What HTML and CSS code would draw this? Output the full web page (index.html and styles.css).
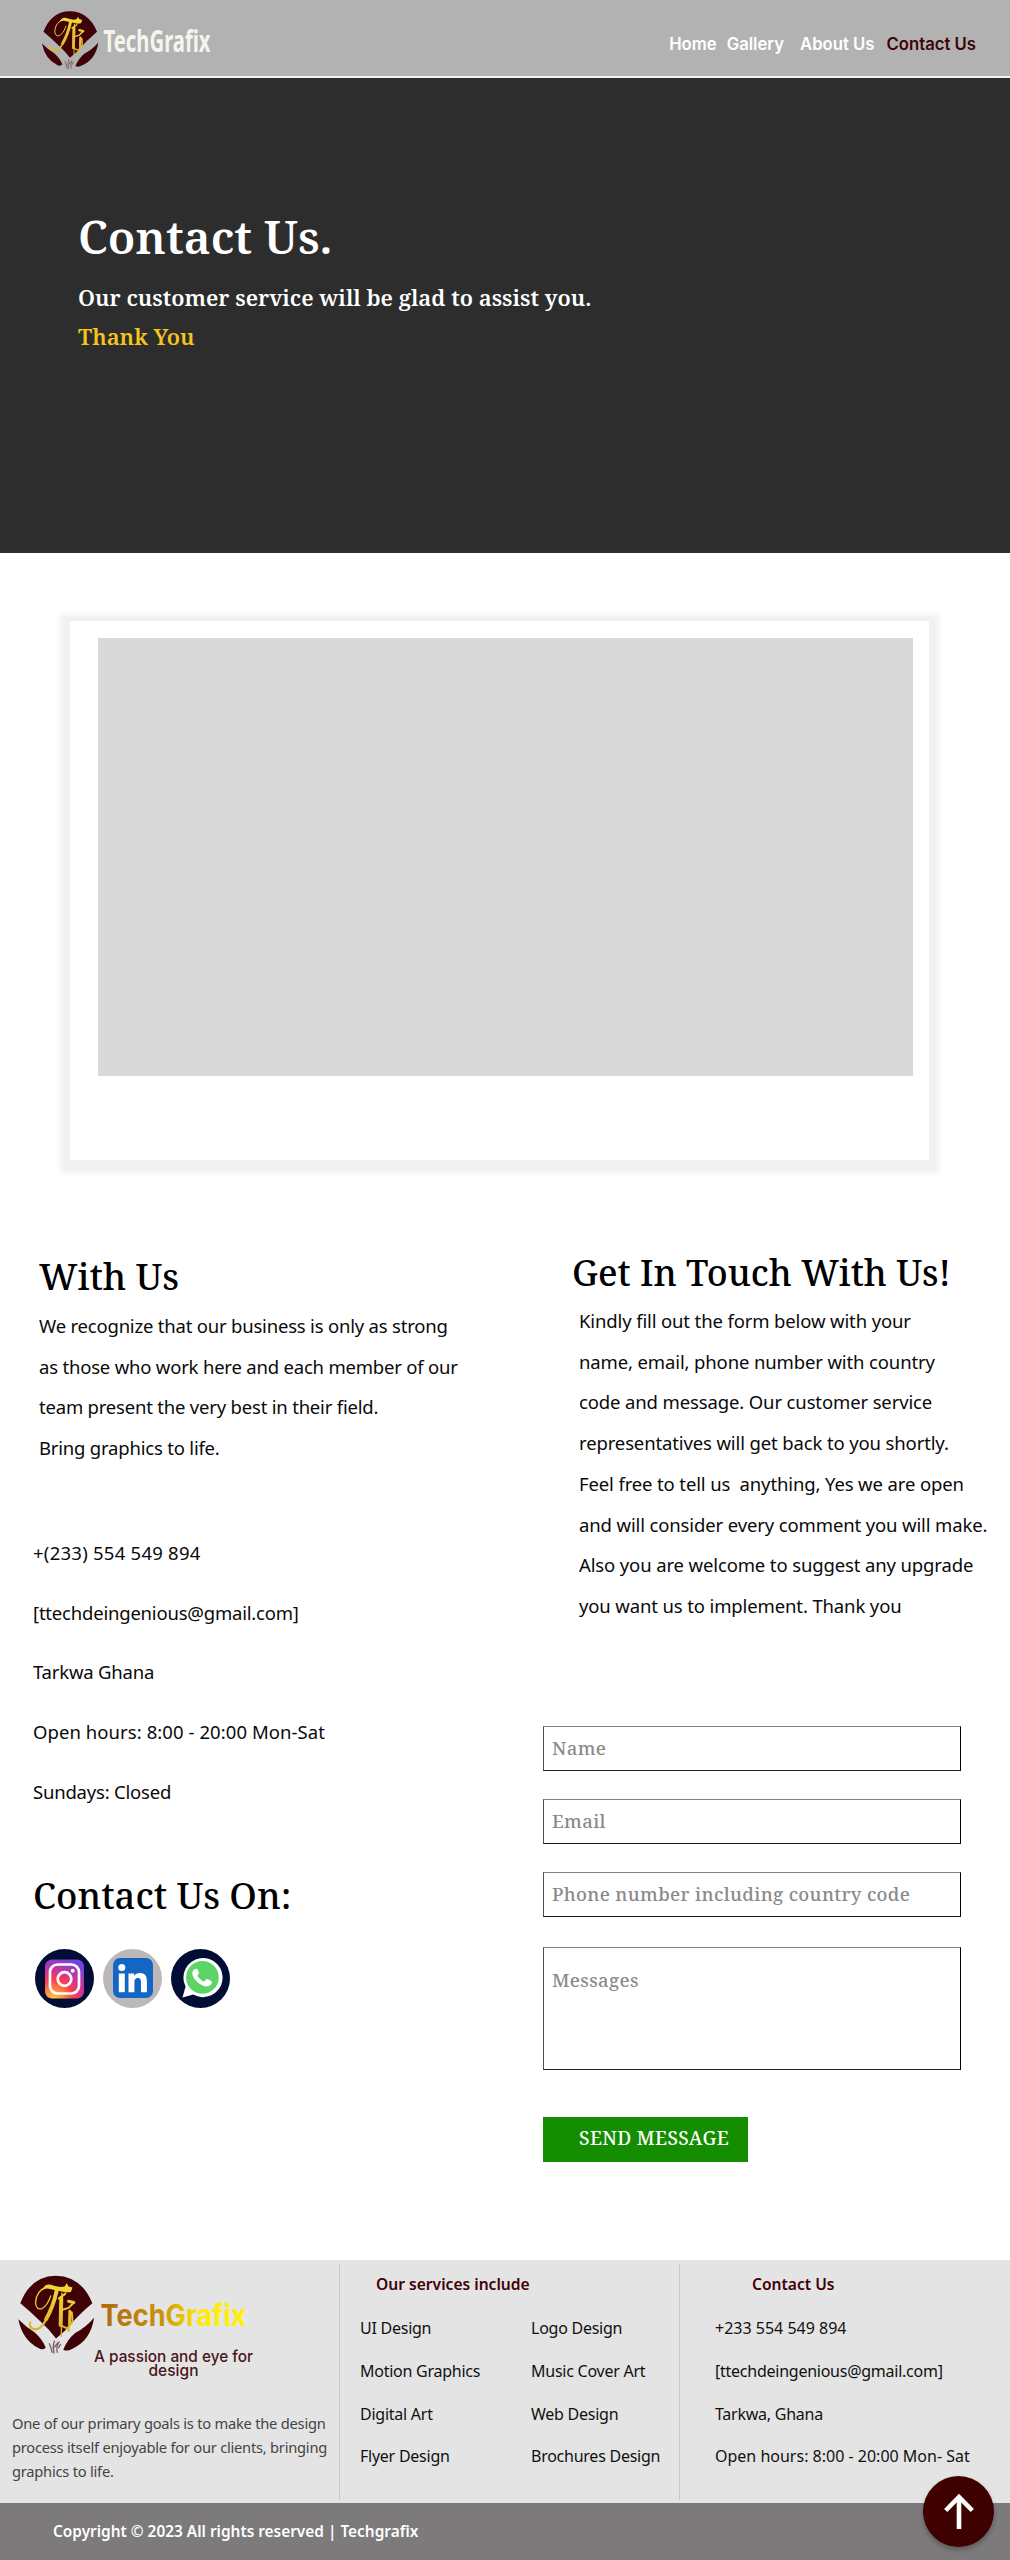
FILE: index.html
```
<!DOCTYPE html>
<html lang="en">
<head>
<meta charset="utf-8">
<title>TechGrafix – Contact Us</title>
<link rel="stylesheet" href="styles.css">
</head>
<body>
<svg class="defs" width="0" height="0" aria-hidden="true">
  <defs>
    <linearGradient id="wordmark" x1="0" x2="1" y1="0" y2="0">
      <stop offset="0" stop-color="#b0680f"/><stop offset=".42" stop-color="#c9920c"/><stop offset=".68" stop-color="#ffec00"/><stop offset="1" stop-color="#fff200"/>
    </linearGradient>
    <linearGradient id="gold" gradientUnits="userSpaceOnUse" x1="0" x2="0" y1="130" y2="290">
      <stop offset="0" stop-color="#f3d838"/><stop offset="1" stop-color="#d9b02a"/>
    </linearGradient>
    <radialGradient id="insta" cx=".22" cy="1.05" r="1.15">
      <stop offset="0" stop-color="#ffd35c"/><stop offset=".2" stop-color="#ff9a3c"/><stop offset=".45" stop-color="#fb3f4e"/><stop offset=".7" stop-color="#c434a0"/><stop offset="1" stop-color="#6a45e0"/>
    </radialGradient>
    <symbol id="emblem" viewBox="50 102 236 244" preserveAspectRatio="none">
      <g fill="#3f0206">
        <path d="M60 190Q92 108 167 107Q244 108 278 190Q232 228 196 272L168 296Q150 272 122 246Q92 216 60 190Z"/>
        <path d="M54 238Q78 262 104 278Q128 300 137 324Q128 332 116 326Q66 300 54 238Z"/>
        <path d="M283 234Q274 302 216 328Q202 336 190 330Q202 300 226 280Q260 262 283 234Z"/>
      </g>
      <path fill="none" stroke="#7c5f6c" stroke-width="4" stroke-linecap="round" d="M148 312Q154 324 156 338M163 304Q157 322 162 340M164 322Q172 310 176 308Q168 324 172 338M182 314L176 324"/>
      <g fill="none" stroke="url(#gold)" stroke-linecap="round" stroke-linejoin="round">
        <path stroke-width="4" d="M142 140Q108 152 106 188Q108 212 126 206Q142 198 152 168M186 160L184 290"/>
        <path stroke-width="12" d="M170 152Q160 200 138 238"/>
        <path stroke-width="7" d="M143 228Q122 278 96 266Q86 260 90 248"/>
        <path stroke-width="12" d="M184 174L182 256"/>
        <path stroke-width="9" d="M210 214L209 252M206 184L222 188"/>
        <path stroke-width="6" d="M176 176L196 162M180 212L206 204L220 190M180 256L202 266L218 246L216 218M208 256L206 274"/>
      </g>
      <path fill="url(#gold)" d="M126 152Q132 132 150 134Q176 144 194 140L201 129L205 139L218 143L213 156L198 158Q164 150 142 146Q132 146 126 152Z"/>
    </symbol>
  </defs>
</svg>

<header class="site-header">
  <svg class="brand" width="180" height="66" viewBox="36 6 180 66" role="img" aria-label="TechGrafix">
    <use href="#emblem" x="41" y="10" width="58" height="60"/>
    <text class="brand-name" x="103.500" y="52" textLength="107" lengthAdjust="spacingAndGlyphs">TechGrafix</text>
  </svg>
  <nav class="nav">
    <a href="#">Home</a><a href="#">Gallery</a><a href="#">About Us</a><a class="active" href="#">Contact Us</a>
  </nav>
</header>

<section class="hero">
  <h1>Contact Us.</h1>
  <p>Our customer service will be glad to assist you.</p>
  <p class="thanks">Thank You</p>
</section>

<main>
  <div class="map-card"><div class="map"></div></div>

  <div class="columns">
    <section class="about">
      <h2>With Us</h2>
      <p class="copy">We recognize that our business is only as strong<br>as those who work here and each member of our<br>team present the very best in their field.<br>Bring graphics to life.</p>
      <ul class="details">
        <li class="phone">+(233) 554 549 894</li>
        <li>[ttechdeingenious@gmail.com]</li>
        <li>Tarkwa Ghana</li>
        <li class="hours">Open hours: 8:00 - 20:00 Mon-Sat</li>
        <li>Sundays: Closed</li>
      </ul>
      <h2 class="social-title">Contact Us On:</h2>
      <div class="social">
        <svg viewBox="0 0 59 59" role="img" aria-label="Instagram">
          <circle cx="29.500" cy="29.500" r="29.500" fill="#020d36"/>
          <rect x="10" y="10.500" width="39" height="39" rx="7" fill="url(#insta)"/>
          <g fill="none" stroke="#fff" stroke-width="2.700"><rect x="15" y="15.500" width="29" height="29" rx="7.500"/><circle cx="29.500" cy="30" r="6.800"/></g>
          <circle cx="37.700" cy="21.700" r="2" fill="#fff"/>
        </svg>
        <svg viewBox="0 0 59 59" role="img" aria-label="LinkedIn">
          <circle cx="29.500" cy="29.500" r="29.500" fill="#bdb8b8"/>
          <rect x="10" y="9" width="40" height="40" rx="7" fill="#1466c5"/>
          <g fill="#fff"><circle cx="18.800" cy="18.500" r="3.500"/><rect x="15.800" y="24.500" width="6" height="18.700"/><path d="M25.500 24.500h5.600v2.600c1-1.800 3-3.100 5.900-3.100 5.800 0 6.900 3.800 6.900 8.800v10.400H38v-9.300c0-2.200 0-5-3.100-5s-3.500 2.400-3.500 4.900v9.400h-5.900z"/></g>
        </svg>
        <svg viewBox="0 0 59 59" role="img" aria-label="WhatsApp">
          <circle cx="29.500" cy="29.500" r="29.500" fill="#020d36"/>
          <path d="M11.500 48.500L14.600 37.600A19.600 19.600 0 1 1 22.300 45.600Z" fill="#fff"/>
          <circle cx="31.400" cy="28.400" r="16.300" fill="#5dd466"/>
          <path d="M25.800 19.800c-1.400-.6-3.400.6-4.200 2.700-1 3 1 7 4.700 10.400 3.600 3.300 8.100 5.200 11.300 4.200 2.400-.8 3.700-2.800 3.200-4.300-.3-.8-4.200-2.800-5-2.700-.9.100-1.900 2.300-2.700 2.400-1.600.1-6.300-4-6.600-5.700-.1-.9 1.500-1.900 1.500-2.800 0-.7-1.400-3.900-2.200-4.200z" fill="#fff"/>
        </svg>
      </div>
    </section>

    <section class="touch">
      <h2>Get In Touch With Us!</h2>
      <p class="copy">Kindly fill out the form below with your<br>name, email, phone number with country<br>code and message. Our customer service<br>representatives will get back to you shortly.<br>Feel free to tell us&nbsp; anything, Yes we are open<br>and will consider every comment you will make.<br>Also you are welcome to suggest any upgrade<br>you want us to implement. Thank you</p>
      <form class="form">
        <input type="text" placeholder="Name">
        <input type="text" placeholder="Email">
        <input type="text" placeholder="Phone number including country code">
        <textarea placeholder="Messages"></textarea>
        <button type="button">SEND MESSAGE</button>
      </form>
    </section>
  </div>
</main>

<footer class="footer">
  <div class="footer-grid">
    <section class="footer-brand">
      <svg width="256" height="119" viewBox="10 2266 256 119" role="img" aria-label="TechGrafix">
        <use href="#emblem" x="17" y="2274" width="78" height="81"/>
        <text class="wordmark" x="100.500" y="2326" textLength="146" lengthAdjust="spacingAndGlyphs">TechGrafix</text>
        <text class="tagline" x="94" y="2361.500" textLength="159" lengthAdjust="spacingAndGlyphs">A passion and eye for</text>
        <text class="tagline" x="148.500" y="2376" textLength="50" lengthAdjust="spacingAndGlyphs">design</text>
      </svg>
      <p>One of our primary goals is to make the design<br>process itself enjoyable for our clients, bringing<br>graphics to life.</p>
    </section>
    <section class="footer-services">
      <h3>Our services include</h3>
      <div class="service-lists">
        <ul><li>UI Design</li><li>Motion Graphics</li><li>Digital Art</li><li>Flyer Design</li></ul>
        <ul><li>Logo Design</li><li>Music Cover Art</li><li>Web Design</li><li>Brochures Design</li></ul>
      </div>
    </section>
    <section class="footer-contact">
      <h3>Contact Us</h3>
      <ul><li class="num">+233 554 549 894</li><li>[ttechdeingenious@gmail.com]</li><li>Tarkwa, Ghana</li><li class="num">Open hours: 8:00 - 20:00 Mon- Sat</li></ul>
    </section>
  </div>
  <div class="copyright">Copyright © 2023 All rights reserved | Techgrafix</div>
  <a class="to-top" href="#" aria-label="Back to top">
    <svg width="30" height="37" viewBox="0 0 30 37" fill="none" stroke="#fff"><path stroke-width="4.600" d="M15 36V4"/><path stroke-width="4.600" d="M1.700 17.500L15 4L28.300 17.500"/></svg>
  </a>
</footer>
</body>
</html>
```
FILE: styles.css
```
* { box-sizing: border-box; }
body { margin: 0; width: 1010px; background: #fff; color: #0a0a0a; font-family: "Noto Sans", sans-serif; white-space: nowrap; }
h1, h2, h3, p, ul { margin: 0; padding: 0; }
ul { list-style: none; }
a { text-decoration: none; }
svg { display: block; overflow: visible; }
.defs { position: absolute; }

.site-header { height: 78px; background: #b2b2b2; border-bottom: 2px solid #f4f4f4; display: flex; justify-content: space-between; align-items: flex-start; padding: 6px 34px 0 36px; }
.brand-name { font: 700 31px "Noto Sans", sans-serif; fill: #f5f5ee; }
.nav { display: flex; margin-top: 27px; font: 600 16.700px/22px Inter, sans-serif; }
.nav a { color: #fff; }
.nav a:nth-child(2) { margin-left: 10px; }
.nav a:nth-child(3) { margin-left: 16px; }
.nav a:nth-child(4) { margin-left: 12px; }
.nav .active { color: #3f0206; }

.hero { height: 475px; background: #2d2d2d; color: #fff; padding: 129px 0 0 78px; font-family: "Noto Serif", serif; }
.hero h1 { font-size: 46.100px; line-height: 60px; font-weight: 600; }
.hero p { font-size: 22.150px; line-height: 39px; font-weight: 600; margin-top: 11px; }
.hero .thanks { color: #f5c51b; margin-top: 0; }

.map-card { width: 859px; height: 539px; margin: 68px 0 0 70px; padding: 17px 16px 0 28px; box-shadow: 0 3px 6px 10px #f1f1f1; }
.map { height: 438px; background: #d9d9d9; }

.columns { display: grid; grid-template-columns: 510px 500px; height: 1100px; }
h2 { font: 500 36.500px/50px "Noto Serif", serif; color: #000; }
.copy { font-size: 18.500px; line-height: 40.700px; letter-spacing: -.2px; }
.about { padding: 91px 0 0 33px; }
.about > h2:first-child, .about .copy { margin-left: 6px; }
.about .copy { margin-top: 5px; }
.details { margin-top: 54px; font-size: 18.500px; line-height: 59.700px; letter-spacing: -.2px; }
.details .hours { letter-spacing: .070px; }
.details .phone { letter-spacing: .250px; }
.social-title { margin-top: 49px; }
.social { display: flex; gap: 9px; margin: 29px 0 0 2px; }
.social svg { width: 59px; height: 59px; }

.touch { padding: 87px 0 0 33px; }
.touch h2 { margin-left: 29px; font-size: 35.800px; }
.touch .copy { margin: 4px 0 0 36px; letter-spacing: -.130px; }
.form { display: flex; flex-direction: column; margin-top: 99px; }
.form input, .form textarea { width: 418px; height: 45px; border: 1px solid; border-color: #828282 #000 #1c1c20 #505055; border-radius: 0; background: #fff; padding: 0 8px 1px; font: 500 18.600px/28px "Noto Serif", serif; letter-spacing: .33px; margin: 0 0 28px; outline: 0; }
.form ::placeholder { color: #8a8a8a; opacity: 1; }
.form textarea { height: 123px; padding-top: 18px; margin: 2px 0 47px; resize: none; display: block; }
.form button { width: 205px; height: 45px; border: 0; background: #148d00; color: #fff; padding: 0 0 2px 36px; text-align: left; font: 500 19px/28px "Noto Serif", serif; letter-spacing: .350px; }

.footer { position: relative; height: 300px; }
.footer-grid { height: 243px; background: #e4e4e4; display: grid; grid-template-columns: 339px 340px 331px; padding: 4px 0 3px; font-size: 16px; line-height: 42.800px; letter-spacing: -.25px; color: #111; }
.footer-services, .footer-contact { border-left: 1px solid #c9c9c9; }
h3 { font-size: 15.600px; line-height: 30px; font-weight: 600; letter-spacing: 0; color: #3f0206; }
.footer-brand svg { margin: 2px 0 0 10px; }
.footer-brand p { margin: 27px 0 0 12px; font-size: 14.700px; line-height: 23.800px; letter-spacing: -.240px; color: #444; }
.footer-services { padding: 5px 0 0 20px; }
.footer-services h3 { margin-left: 16px; }
.service-lists { display: grid; grid-template-columns: 171px 1fr; margin-top: 8px; }
.footer-contact { padding: 5px 0 0 35px; }
.footer-contact h3 { margin-left: 37px; }
.footer-contact ul { margin-top: 8px; }
.footer-contact .num { letter-spacing: 0; }
.copyright { height: 57px; background: #7c7a7b; color: #fff; padding-left: 53px; font-size: 15.400px; line-height: 57px; font-weight: 600; }
.to-top { position: absolute; left: 923px; top: 216px; width: 71px; height: 71px; border-radius: 50%; background: #3f0000; box-shadow: 0 3px 5px #0004; display: flex; align-items: center; justify-content: center; }
.brand-name, .wordmark, .tagline { letter-spacing: 0; }
.wordmark { font: 700 30px Inter, sans-serif; fill: url(#wordmark); }
.tagline { font: 500 16.500px Inter, sans-serif; fill: #4b1520; }
```
